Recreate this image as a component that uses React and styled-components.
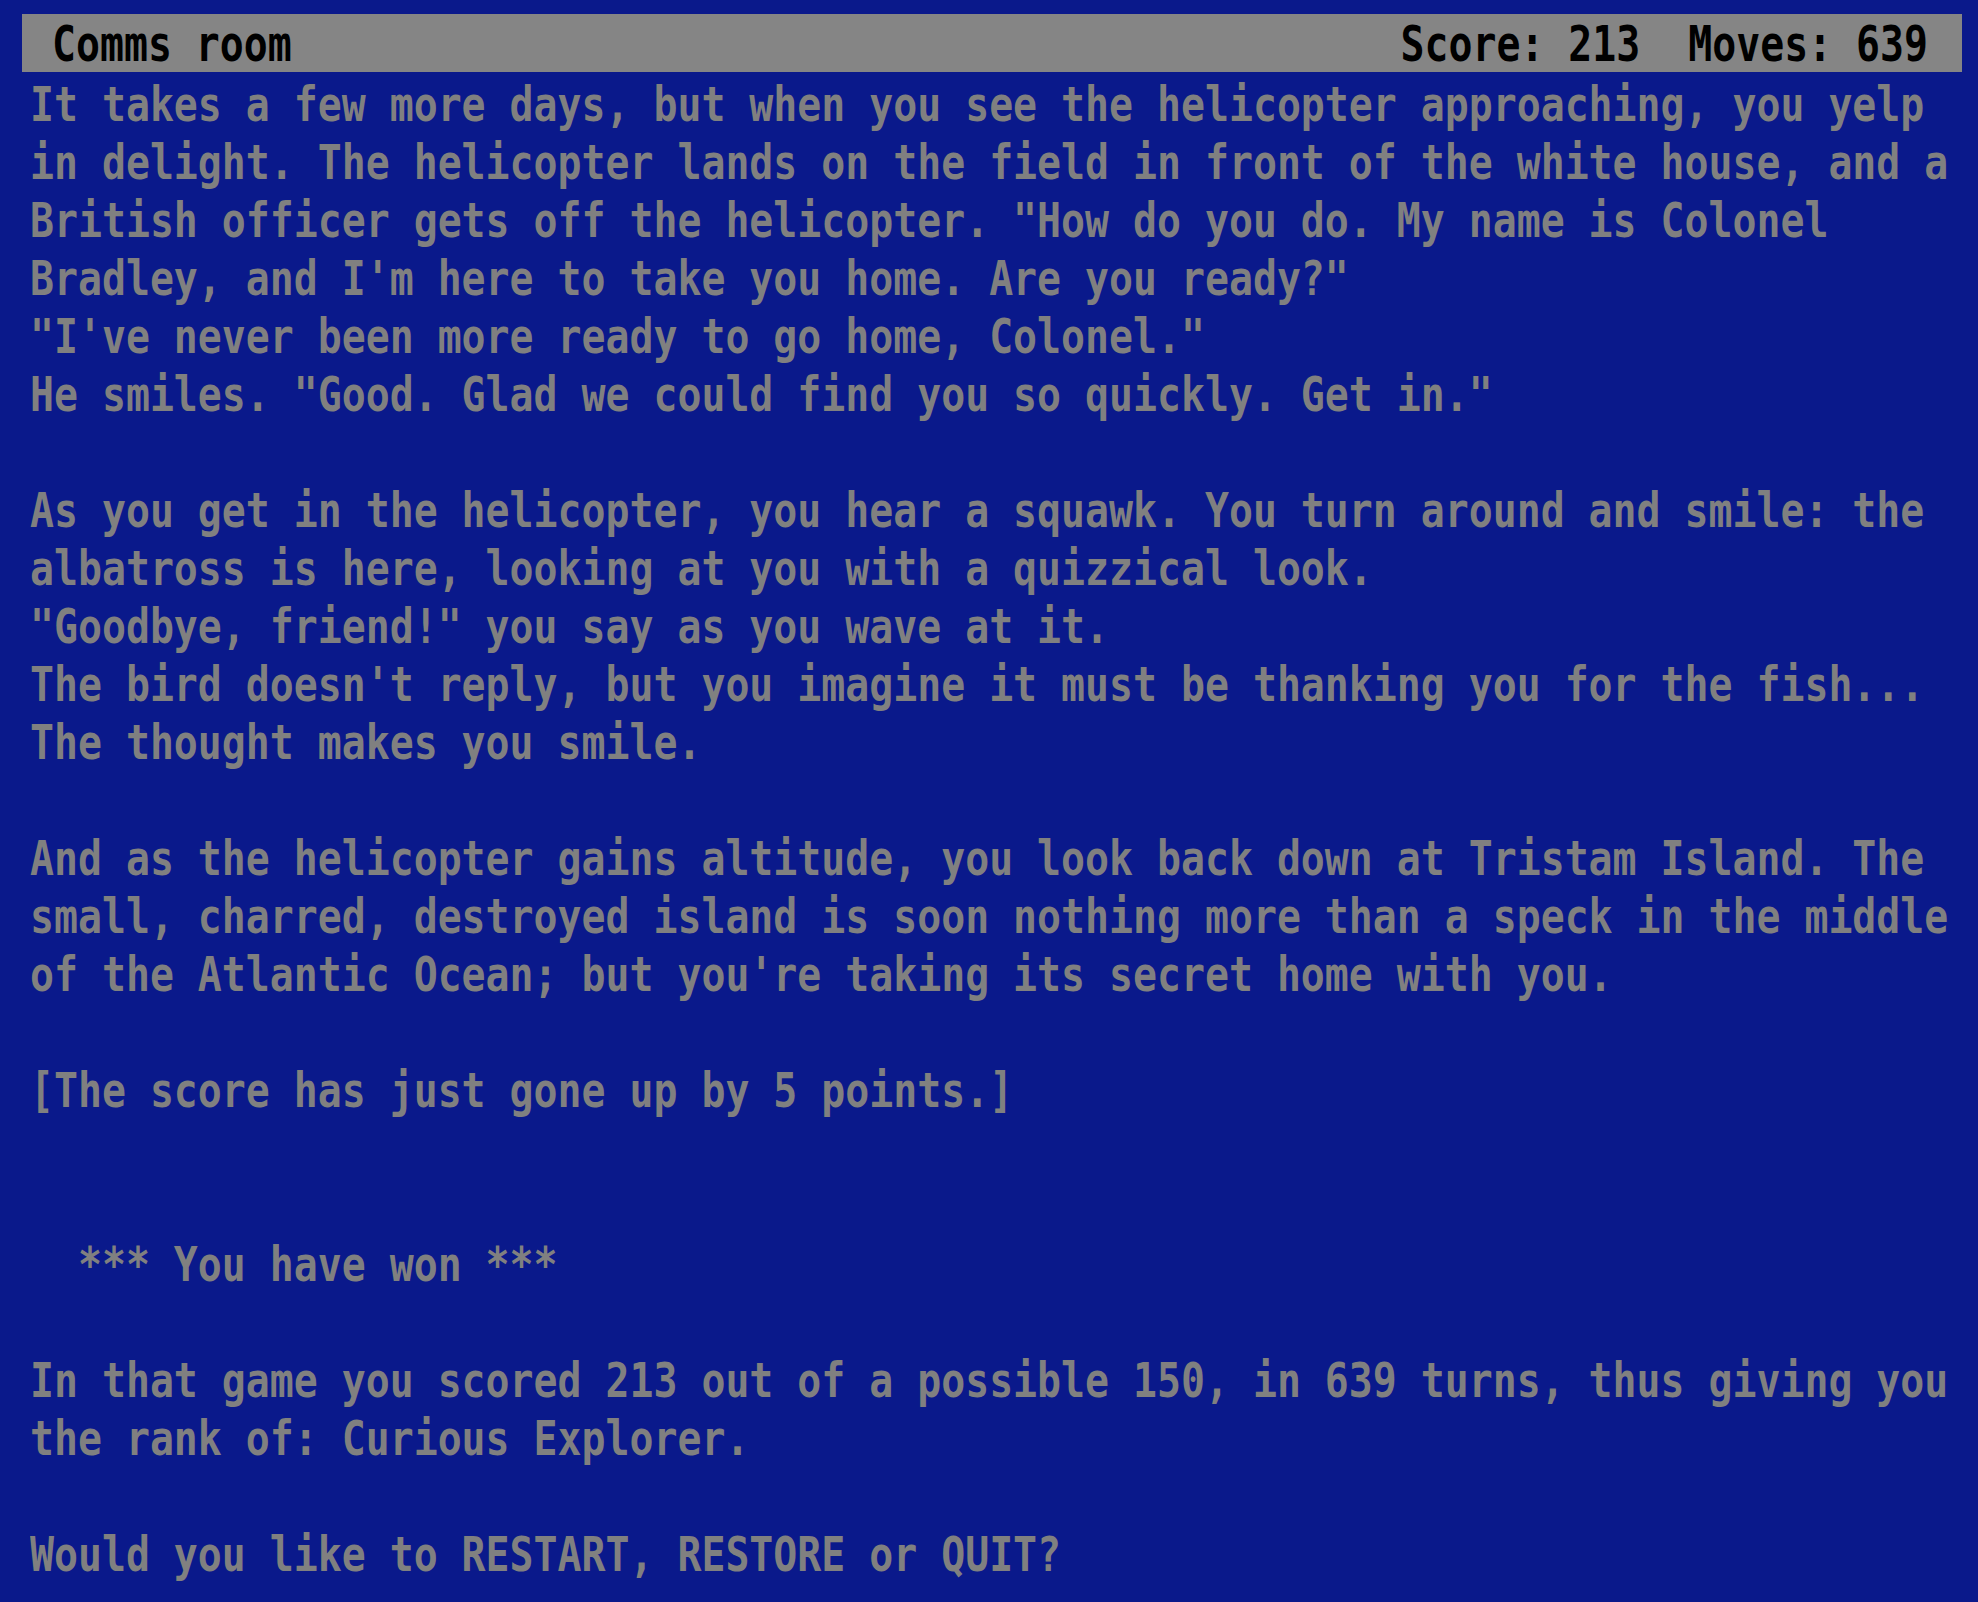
import React from "react";
import styled, { createGlobalStyle } from "styled-components";

const GlobalStyle = createGlobalStyle`
  html, body {
    margin: 0;
    padding: 0;
    background: #0a198b;
  }
  body {
    font-family: "DejaVu Sans Mono", "Liberation Mono", monospace;
  }
`;

const Screen = styled.main`
  box-sizing: border-box;
  width: 1978px;
  min-height: 1602px;
  padding-top: 14px;
  background: #0a198b;
  overflow: hidden;
`;

const StatusBar = styled.header`
  box-sizing: border-box;
  margin-left: 22px;
  width: 1940px;
  height: 58px;
  padding: 0 34px 0 30px;
  display: flex;
  justify-content: space-between;
  background: #858585;
  color: #000;
`;

const StatusText = styled.span`
  display: block;
  font-size: 39.85px;
  font-weight: 700;
  line-height: 58px;
  white-space: pre;
  transform: scaleY(1.24);
  transform-origin: 0 26.5px;
`;

const Transcript = styled.section`
  padding-left: 30px;
  color: #808080;
`;

const Row = styled.div`
  height: 58px;
  font-size: 39.85px;
  font-weight: 700;
  line-height: 58px;
  white-space: pre;
  transform: scaleY(1.2);
  transform-origin: 0 12px;
`;

const lines = [
  "It takes a few more days, but when you see the helicopter approaching, you yelp",
  "in delight. The helicopter lands on the field in front of the white house, and a",
  "British officer gets off the helicopter. \"How do you do. My name is Colonel",
  "Bradley, and I'm here to take you home. Are you ready?\"",
  "\"I've never been more ready to go home, Colonel.\"",
  "He smiles. \"Good. Glad we could find you so quickly. Get in.\"",
  "",
  "As you get in the helicopter, you hear a squawk. You turn around and smile: the",
  "albatross is here, looking at you with a quizzical look.",
  "\"Goodbye, friend!\" you say as you wave at it.",
  "The bird doesn't reply, but you imagine it must be thanking you for the fish...",
  "The thought makes you smile.",
  "",
  "And as the helicopter gains altitude, you look back down at Tristam Island. The",
  "small, charred, destroyed island is soon nothing more than a speck in the middle",
  "of the Atlantic Ocean; but you're taking its secret home with you.",
  "",
  "[The score has just gone up by 5 points.]",
  "",
  "",
  "  *** You have won ***",
  "",
  "In that game you scored 213 out of a possible 150, in 639 turns, thus giving you",
  "the rank of: Curious Explorer.",
  "",
  "Would you like to RESTART, RESTORE or QUIT?",
];

export default function App() {
  return (
    <>
      <GlobalStyle />
      <Screen>
        <StatusBar>
          <StatusText>Comms room</StatusText>
          <StatusText>Score: 213  Moves: 639</StatusText>
        </StatusBar>
        <Transcript>
          {lines.map((line, i) => (
            <Row key={i}>{line}</Row>
          ))}
        </Transcript>
      </Screen>
    </>
  );
}
